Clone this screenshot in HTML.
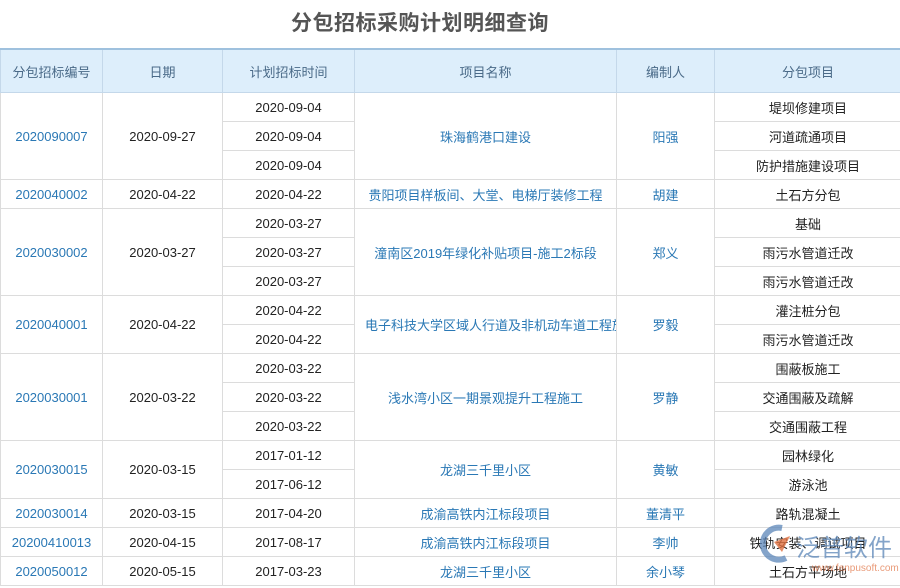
<!DOCTYPE html>
<html><head><meta charset="utf-8"><style>
body{margin:0;width:900px;height:588px;overflow:hidden;background:#fff;font-family:"Liberation Sans","Noto Sans CJK SC",sans-serif;position:relative}
h1{margin:0;position:absolute;top:7px;left:0;width:840px;text-align:center;font-size:21px;font-weight:bold;color:#555;letter-spacing:0.5px}
table{position:absolute;top:48px;left:0;border-collapse:collapse;table-layout:fixed;width:901px;font-size:13px}
th{background:#ddeefb;color:#4a6a88;font-weight:normal;height:42px;padding:0;border:1px solid #c4d8ea;border-top:2px solid #9fc1de}
td{height:28px;border:1px solid #dcdcdc;text-align:center;color:#222;padding:0;white-space:nowrap;overflow:hidden}
td.b{color:#2a78b5}
.wm{position:absolute;left:752px;top:512px;width:148px;height:64px}
</style></head><body>
<h1>分包招标采购计划明细查询</h1>
<table>
<colgroup><col style="width:102px"><col style="width:120px"><col style="width:132px"><col style="width:262px"><col style="width:98px"><col style="width:187px"></colgroup>
<tr><th>分包招标编号</th><th>日期</th><th>计划招标时间</th><th>项目名称</th><th>编制人</th><th>分包项目</th></tr>
<tr><td class="b" rowspan="3">2020090007</td><td rowspan="3">2020-09-27</td><td>2020-09-04</td><td class="b" rowspan="3">珠海鹤港口建设</td><td class="b" rowspan="3">阳强</td><td>堤坝修建项目</td></tr>
<tr><td>2020-09-04</td><td>河道疏通项目</td></tr>
<tr><td>2020-09-04</td><td>防护措施建设项目</td></tr>
<tr><td class="b">2020040002</td><td>2020-04-22</td><td>2020-04-22</td><td class="b">贵阳项目样板间、大堂、电梯厅装修工程</td><td class="b">胡建</td><td>土石方分包</td></tr>
<tr><td class="b" rowspan="3">2020030002</td><td rowspan="3">2020-03-27</td><td>2020-03-27</td><td class="b" rowspan="3">潼南区2019年绿化补贴项目-施工2标段</td><td class="b" rowspan="3">郑义</td><td>基础</td></tr>
<tr><td>2020-03-27</td><td>雨污水管道迁改</td></tr>
<tr><td>2020-03-27</td><td>雨污水管道迁改</td></tr>
<tr><td class="b" rowspan="2">2020040001</td><td rowspan="2">2020-04-22</td><td>2020-04-22</td><td class="b" rowspan="2" style="text-align:left;padding-left:10px">电子科技大学区域人行道及非机动车道工程施</td><td class="b" rowspan="2">罗毅</td><td>灌注桩分包</td></tr>
<tr><td>2020-04-22</td><td>雨污水管道迁改</td></tr>
<tr><td class="b" rowspan="3">2020030001</td><td rowspan="3">2020-03-22</td><td>2020-03-22</td><td class="b" rowspan="3">浅水湾小区一期景观提升工程施工</td><td class="b" rowspan="3">罗静</td><td>围蔽板施工</td></tr>
<tr><td>2020-03-22</td><td>交通围蔽及疏解</td></tr>
<tr><td>2020-03-22</td><td>交通围蔽工程</td></tr>
<tr><td class="b" rowspan="2">2020030015</td><td rowspan="2">2020-03-15</td><td>2017-01-12</td><td class="b" rowspan="2">龙湖三千里小区</td><td class="b" rowspan="2">黄敏</td><td>园林绿化</td></tr>
<tr><td>2017-06-12</td><td>游泳池</td></tr>
<tr><td class="b">2020030014</td><td>2020-03-15</td><td>2017-04-20</td><td class="b">成渝高铁内江标段项目</td><td class="b">董清平</td><td>路轨混凝土</td></tr>
<tr><td class="b">20200410013</td><td>2020-04-15</td><td>2017-08-17</td><td class="b">成渝高铁内江标段项目</td><td class="b">李帅</td><td>铁轨安装、调试项目</td></tr>
<tr><td class="b">2020050012</td><td>2020-05-15</td><td>2017-03-23</td><td class="b">龙湖三千里小区</td><td class="b">余小琴</td><td>土石方平场地</td></tr>
</table>
<svg class="wm" viewBox="0 0 148 64">
<path d="M30 16 A16 16 0 1 0 34 46" fill="none" stroke="#5b86b8" stroke-width="6" opacity="0.75"/>
<path d="M22 30 L38 24 L30 40 Z" fill="#e07040" opacity="0.8"/>
<text x="44" y="44" font-family="Liberation Sans,Noto Sans CJK SC,sans-serif" font-size="24" fill="#5b86b8" opacity="0.75">泛普软件</text>
<text x="60" y="59" font-family="Liberation Sans,sans-serif" font-size="10" fill="#e07040" opacity="0.7">www.fanpusoft.com</text>
</svg>
</body></html>
